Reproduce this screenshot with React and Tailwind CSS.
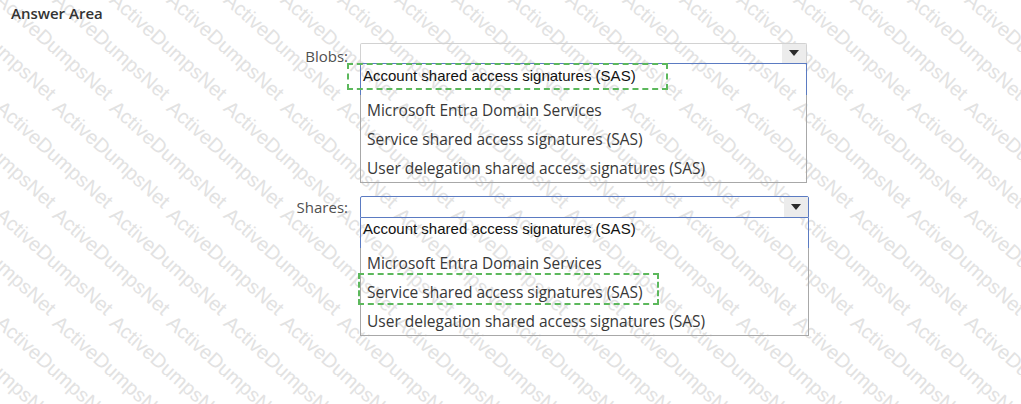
import React from "react";

const segoe = { fontFamily: '"Open Sans", "Noto Sans", sans-serif' };

const options = [
  "Account shared access signatures (SAS)",
  "Microsoft Entra Domain Services",
  "Service shared access signatures (SAS)",
  "User delegation shared access signatures (SAS)",
];

function Watermark() {
  const marks = [];
  for (let r = -2; r < 5; r++) {
    for (let c = -3; c < 18; c++) {
      marks.push({ x: 2 + c * 57, y: 208 + (r - 2) * 107.5 });
    }
  }
  return (
    <div className="pointer-events-none absolute inset-0 overflow-hidden">
      {marks.map((m, i) => (
        <span
          key={i}
          className="absolute origin-top-left rotate-[42deg] whitespace-nowrap font-['Liberation_Sans',Arial,sans-serif] text-[20px] leading-none text-[#e2e2e2]"
          style={{ left: m.x + 4, top: m.y - 4 }}
        >
          ActiveDumpsNet
        </span>
      ))}
    </div>
  );
}

function Arrow() {
  return (
    <svg width="10" height="6" viewBox="0 0 10 6">
      <path d="M0 0 L10 0 L5 6 Z" fill="#2b2b2b" />
    </svg>
  );
}

function Dropdown({ label, focused, answer, boxClass }) {
  return (
    <div className="flex items-start">
      <div
        className={`w-[350px] pr-[2px] text-right text-[15px] text-[#505050] ${
          focused ? "" : "pt-[2px]"
        }`}
        style={segoe}
      >
        {label}:
      </div>
      <div className={`ml-[10px] ${boxClass}`}>
        {/* combo */}
        <div
          className={`flex items-stretch rounded-t-[2px] border ${
            focused ? "h-[22px] border-[#5b7bc2]" : "h-[20px] border-b-0 border-[#d2d2d2]"
          }`}
        >
          <div className="flex-1" />
          <div className="flex w-[24px] items-center justify-center bg-[#ececec]">
            <Arrow />
          </div>
        </div>
        {/* list */}
        <div className="relative border border-t-0 border-[#a8a8a8]">
          <div
            className={`relative -mx-px border-x border-[#5b7bc2] ${
              focused ? "h-[30px]" : "h-[32px] border-t"
            }`}
          >
            <div
              className={`pl-[2px] font-['Liberation_Sans',Arial,sans-serif] text-[15px] leading-[18px] text-[#111] ${
                focused ? "pt-[2px]" : "pt-[3px]"
              }`}
            >
              {options[0]}
            </div>
            {answer === 0 && (
              <div className="absolute left-[-14px] top-[-1px] h-[27px] w-[321px] border-2 border-dashed border-[#5cb85c]" />
            )}
          </div>
          {options.slice(1).map((o, i) => (
            <div key={o} className="relative flex h-[29px] items-center pl-[6px] pt-[4px]">
              <span className="text-[15.5px] text-[#383838]" style={segoe}>
                {o}
              </span>
              {answer === i + 1 && (
                <div className="absolute left-[-3px] top-[-4px] h-[32px] w-[301px] border-2 border-dashed border-[#5cb85c]" />
              )}
            </div>
          ))}
        </div>
      </div>
    </div>
  );
}

export default function App() {
  return (
    <div className="relative h-[404px] w-[1021px] overflow-hidden bg-white">
      <Watermark />
      <div className="relative z-10">
        <div
          className="pl-[11px] pt-[2px] text-[15px] font-semibold text-[#333]"
          style={segoe}
        >
          Answer Area
        </div>
        <div className="mt-[18px] flex flex-col gap-[13px]">
          <Dropdown label="Blobs" answer={0} boxClass="w-[447px]" />
          <Dropdown label="Shares" focused answer={2} boxClass="w-[449px]" />
        </div>
      </div>
    </div>
  );
}
